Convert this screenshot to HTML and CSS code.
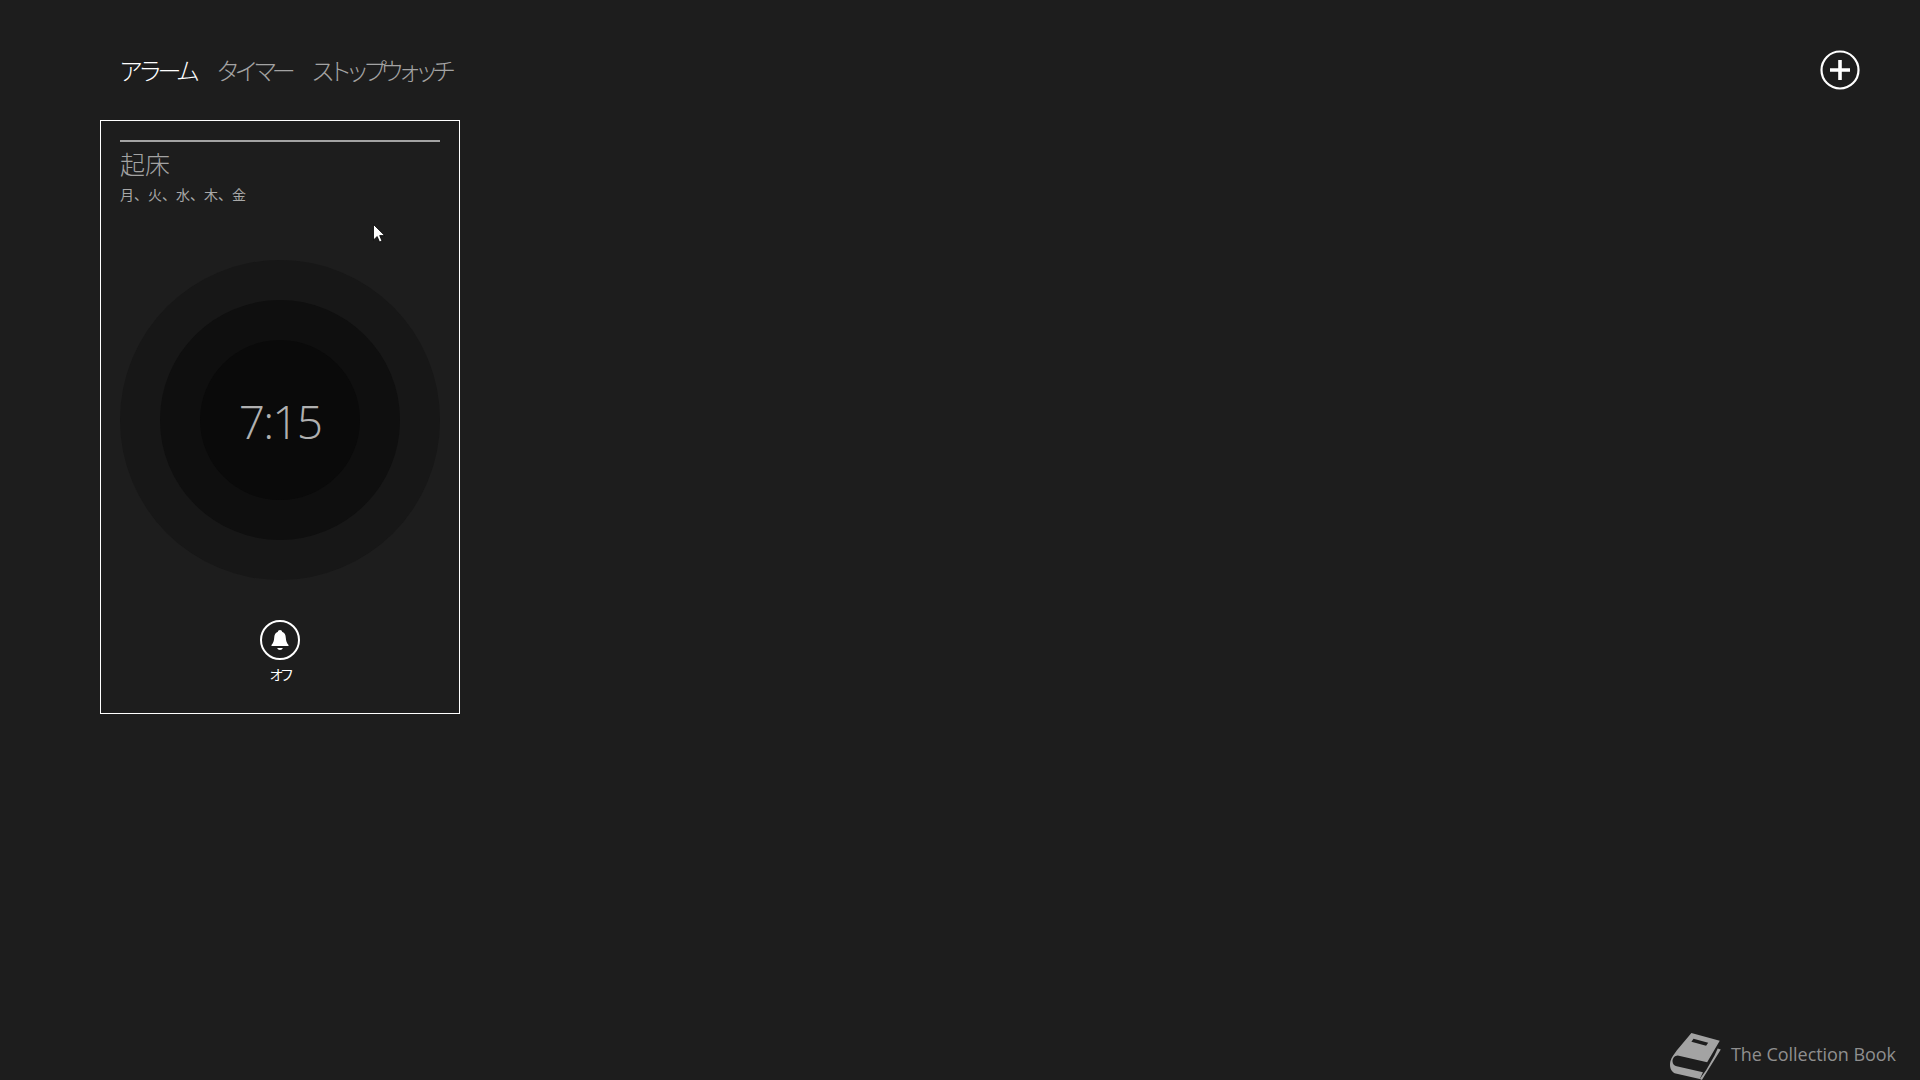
FILE: index.html
```html
<!DOCTYPE html>
<html lang="ja">
<head>
<meta charset="utf-8">
<title>アラーム</title>
<link rel="stylesheet" href="styles.css">
</head>
<body>
<div class="page">
  <header class="top">
    <nav class="tabs">
      <span class="tab active tab-alarm">アラーム</span>
      <span class="tab tab-timer">タイマー</span>
      <span class="tab tab-watch">ストップウォッチ</span>
    </nav>
    <svg class="add" viewBox="0 0 40 40" aria-label="追加">
      <circle cx="20" cy="20" r="18.5" fill="none" stroke="#fff" stroke-width="2.2"/>
      <path d="M10 20H30M20 10V30" stroke="#fff" stroke-width="3.6" fill="none"/>
    </svg>
  </header>
  <section class="card">
    <div class="card-rule"></div>
    <div class="card-title">起床</div>
    <div class="card-days">月、火、水、木、金</div>
    <div class="dial">
      <div class="ring-mid">
        <div class="ring-inner">
          <span class="time">7:15</span>
        </div>
      </div>
    </div>
    <div class="toggle">
      <svg class="bell" viewBox="0 0 40 40">
        <circle cx="20" cy="20" r="19" fill="none" stroke="#fff" stroke-width="2"/>
        <path d="M20 10c1.200 0 2 .8 2.100 1.800 2.700.9 3.500 3.300 3.700 6 .2 3 .9 5.400 2.700 7.200v1H11.500v-1c1.800-1.800 2.500-4.200 2.700-7.200.2-2.700 1-5.100 3.700-6 .1-1 .9-1.800 2.100-1.800z" fill="#fff"/>
        <path d="M17.200 28h5.600c-.3 1.200-1.400 2-2.800 2s-2.500-.8-2.800-2z" fill="#fff"/>
      </svg>
      <span class="toggle-label">オフ</span>
    </div>
  </section>
  <svg class="cursor" viewBox="0 0 12 19">
    <path d="M.5.500V16l3.700-3.500 2.300 5.500 2.500-1-2.300-5.400h5z" fill="#fff" stroke="#000" stroke-width=".8"/>
  </svg>
  <footer class="brand">
    <svg class="book" viewBox="0 0 60 52" preserveAspectRatio="none">
      <path d="M28 4 55 12 43 34 15 27C12 27 10 30 10 33 10 36 12 38 14 38L39 44 36 51 12 45C8 43 7 38 8 33 9 29 12 25 14 22z" fill="#a3a3a3"/>
      <path d="M30 10l14 4-2 3-14-4z" fill="#1d1d1d"/>
      <path d="M50 27 53 20 56 21 38 52 36 51 42 42z" fill="#a3a3a3"/>
    </svg>
    <span class="brand-name">The Collection Book</span>
  </footer>
</div>
</body>
</html>
```

FILE: styles.css
```css
html, body {
  margin: 0;
  height: 100%;
  background: #1d1d1d;
  overflow: hidden;
}
.page {
  position: relative;
  height: 1080px;
  display: flex;
  flex-direction: column;
  padding: 50px 60px 0 100px;
  box-sizing: border-box;
  font-family: "Noto Sans CJK JP", "Noto Sans", sans-serif;
  color: #a3a3a3;
}
.top {
  display: flex;
  justify-content: space-between;
  align-items: center;
  height: 40px;
  padding-left: 19px;
  margin-bottom: 30px;
}
.tabs {
  display: flex;
  font-size: 24px;
  font-weight: 300;
  line-height: 40px;
}
.tab-alarm { width: 97px; letter-spacing: -4.800px; }
.tab-timer { width: 95px; letter-spacing: -5.400px; }
.tab-watch { letter-spacing: -6.700px; }
.active { color: #fff; }
.add {
  width: 40px;
  height: 40px;
}
.card {
  width: 360px;
  height: 594px;
  box-sizing: border-box;
  border: 1px solid #fff;
  padding: 19px 19px 0;
  display: flex;
  flex-direction: column;
}
.card-rule {
  height: 2px;
  background: #a3a3a3;
}
.card-title {
  margin-top: 4px;
  font-size: 25px;
  font-weight: 300;
  line-height: 34px;
}
.card-days {
  margin-top: 4px;
  font-size: 14px;
  line-height: 20px;
  color: #a8a8a8;
}
.dial {
  margin-top: 56px;
  width: 320px;
  height: 320px;
  border-radius: 50%;
  background: #171717;
  display: flex;
  align-items: center;
  justify-content: center;
}
.ring-mid {
  width: 240px;
  height: 240px;
  border-radius: 50%;
  background: #0f0f0f;
  display: flex;
  align-items: center;
  justify-content: center;
}
.ring-inner {
  width: 160px;
  height: 160px;
  border-radius: 50%;
  background: #0a0a0a;
  display: flex;
  align-items: center;
  justify-content: center;
}
.time {
  padding-top: 2px;
  font-family: "Open Sans", sans-serif;
  font-size: 46px;
  font-weight: 300;
  letter-spacing: -1.800px;
  color: #b0b0b0;
  line-height: 1;
}
.toggle {
  margin-top: 40px;
  display: flex;
  flex-direction: column;
  align-items: center;
  gap: 4px;
}
.bell {
  width: 40px;
  height: 40px;
}
.toggle-label {
  font-size: 14px;
  line-height: 20px;
  color: #fff;
  letter-spacing: -3.500px;
}
.cursor {
  position: absolute;
  left: 373px;
  top: 224px;
  width: 12px;
  height: 19px;
}
.brand {
  position: absolute;
  right: 24px;
  bottom: 0;
  height: 52px;
  display: flex;
  align-items: center;
  gap: 6px;
  font-family: "Open Sans", sans-serif;
  font-size: 18px;
}
.book {
  width: 63px;
  height: 51px;
}
.brand-name {
  color: #8f8f8f;
  line-height: 24px;
  letter-spacing: -0.050px;
}
```
